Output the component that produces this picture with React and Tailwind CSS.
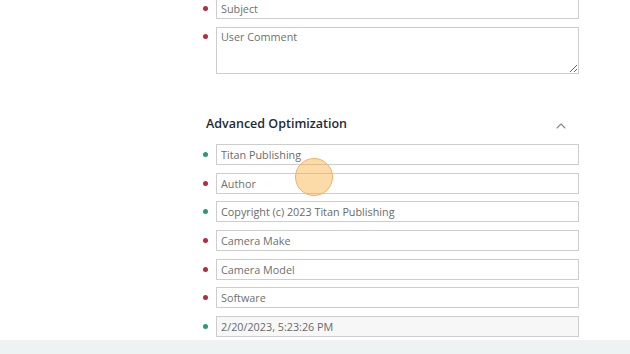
import { ChevronUp } from "lucide-react";

const fields = [
  { label: "Titan Publishing", ok: true, value: true },
  { label: "Author", ok: false },
  { label: "Copyright (c) 2023 Titan Publishing", ok: true, value: true },
  { label: "Camera Make", ok: false },
  { label: "Camera Model", ok: false },
  { label: "Software", ok: false },
  { label: "2/20/2023, 5:23:26 PM", ok: true, value: true, disabled: true },
];

function Dot({ ok, className = "" }) {
  return (
    <span
      className={
        "block h-[5px] w-[5px] shrink-0 rounded-full " +
        (ok ? "bg-[#2b9a70] " : "bg-[#b82a40] ") +
        className
      }
    />
  );
}

function App() {
  return (
    <div
      className="relative h-[354px] w-[630px] overflow-hidden bg-white"
      style={{ fontFamily: '"Open Sans", "Liberation Sans", sans-serif' }}
    >
      <div className="pl-[203px] pr-[51px]">
        {/* Basic fields */}
        <div className="-mt-[2px] flex items-center gap-[8px]">
          <Dot ok={false} />
          <input
            readOnly
            placeholder="Subject"
            className="h-[21px] w-full border border-[#cdcdcd] bg-white px-[4px] text-[10.8px] text-[#666] placeholder:text-[#707070] outline-none"
          />
        </div>
        <div className="mt-[8px] flex items-start gap-[8px]">
          <Dot ok={false} className="mt-[7px]" />
          <textarea
            readOnly
            placeholder="User Comment"
            className="block h-[47px] w-full resize-y border border-[#cdcdcd] bg-white px-[4px] py-[2px] text-[10.8px] leading-[14px] text-[#666] placeholder:text-[#707070] outline-none"
          />
        </div>

        {/* Advanced Optimization */}
        <div className="mt-[40px] flex h-[20px] items-center justify-between pl-[3px] pr-[10px]">
          <h2 className="text-[12.5px] font-semibold text-[#1c2b3a]">
            Advanced Optimization
          </h2>
          <ChevronUp className="mt-[3px] h-[16px] w-[16px] text-[#8a8a8a]" strokeWidth={1.6} />
        </div>

        <div className="mt-[10px] flex flex-col gap-[7.67px]">
          {fields.map((f) => (
            <div key={f.label} className="flex items-center gap-[8px]">
              <Dot ok={f.ok} />
              <input
                readOnly
                disabled={f.disabled}
                defaultValue={f.value ? f.label : undefined}
                placeholder={f.value ? undefined : f.label}
                className={
                  "h-[21px] w-full border border-[#cdcdcd] px-[4px] text-[10.8px] text-[#6a6a6a] placeholder:text-[#707070] outline-none " +
                  (f.disabled ? "bg-[#f7f7f7]" : "bg-white")
                }
              />
            </div>
          ))}
        </div>
      </div>

      {/* Footer strip */}
      <div className="absolute bottom-0 left-0 h-[14px] w-full bg-[#eef2f2]" />

      {/* Click highlight */}
      <div className="absolute left-[295px] top-[158px] h-[38px] w-[38px] rounded-full border border-[#f2b266] bg-[rgba(251,176,64,0.45)]" />
    </div>
  );
}

export default App;
